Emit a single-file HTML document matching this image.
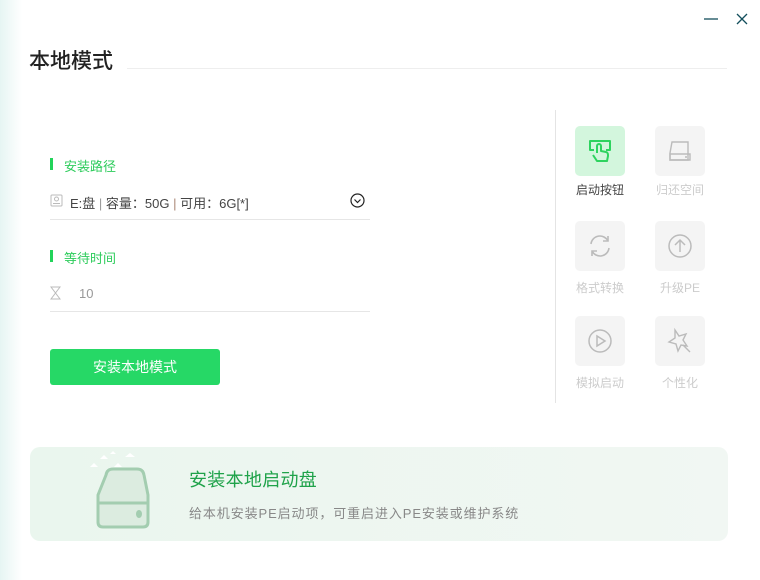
<!DOCTYPE html>
<html><head><meta charset="utf-8"><style>
body{margin:0;width:760px;height:580px;position:relative;overflow:hidden;background:#fff;font-family:"Liberation Sans","Noto Sans CJK SC",sans-serif;}
.abs{position:absolute}
.lbl{font-size:13px;color:#2ecc5c}
.bar{width:3px;height:12px;background:#22d35a}
.tile{width:50px;height:50px;border-radius:5px;background:#f4f4f4;display:flex;align-items:center;justify-content:center}
.tl{font-size:12px;color:#ccc;text-align:center;width:60px}
</style></head><body>
<div class="abs" style="left:0;top:0;width:22px;height:580px;background:linear-gradient(90deg,#e6f5f3,#fff)"></div>
<svg class="abs" style="left:703px;top:10px" width="50" height="20"><path d="M1 9H15" stroke="#134f5c" stroke-width="1.3"/><path d="M34 4L44 14M44 4L34 14" stroke="#134f5c" stroke-width="1.3"/></svg>
<div class="abs" style="left:29px;top:45px;font-size:21px;color:#222;font-weight:500">本地模式</div>
<div class="abs" style="left:127px;top:68px;width:600px;height:1px;background:#eee"></div>
<div class="abs bar" style="left:50px;top:158px"></div>
<div class="abs lbl" style="left:64px;top:156px">安装路径</div>
<svg class="abs" style="left:50px;top:194px" width="13" height="13"><rect x="1" y="1" width="11" height="11" rx="1" fill="none" stroke="#bbb"/><circle cx="6.5" cy="5" r="2" fill="none" stroke="#bbb"/><path d="M3 9.5H10" stroke="#bbb"/></svg>
<div class="abs" style="left:70px;top:193px;font-size:13px;color:#444">E:盘 <span style="color:#999">|</span> 容量：50G <span style="color:#a87">|</span> 可用：6G[*]</div>
<svg class="abs" style="left:350px;top:193px" width="15" height="15"><circle cx="7.5" cy="7.5" r="6.5" fill="none" stroke="#222" stroke-width="1.2"/><path d="M4.5 6.5L7.5 9.5L10.5 6.5" fill="none" stroke="#222" stroke-width="1.2"/></svg>
<div class="abs" style="left:50px;top:219px;width:320px;height:1px;background:#e6e6e6"></div>
<div class="abs bar" style="left:50px;top:250px"></div>
<div class="abs lbl" style="left:64px;top:248px">等待时间</div>
<svg class="abs" style="left:49px;top:286px" width="14" height="14"><path d="M2 1H11L6.5 7L11 13H2L6.5 7Z" fill="none" stroke="#bbb"/></svg>
<div class="abs" style="left:79px;top:286px;font-size:13px;color:#999">10</div>
<div class="abs" style="left:50px;top:311px;width:320px;height:1px;background:#e6e6e6"></div>
<div class="abs" style="left:50px;top:349px;width:170px;height:36px;border-radius:3px;background:#26d866;color:#fff;font-size:14px;text-align:center;line-height:36px">安装本地模式</div>
<div class="abs" style="left:555px;top:110px;width:1px;height:293px;background:#e4e4e4"></div>
<div class="abs tile" style="left:575px;top:126px;background:#d3f6dd"><svg width="28" height="28" viewBox="0 0 28 28"><path d="M8 13H4V4H24V13H20M11 16V9a2 2 0 0 1 4 0V14l5 1c2 .5 2 2 2 4l-1 5H11l-4-6" fill="none" stroke="#2ed35f" stroke-width="2" stroke-linejoin="round"/></svg></div>
<div class="abs tl" style="left:570px;top:181px;color:#444">启动按钮</div>
<div class="abs tile" style="left:655px;top:126px"><svg width="26" height="26"><path d="M5 4H21V22H3V15Z" fill="none" stroke="#bbb" stroke-width="1.4"/><path d="M3 16H23V22H3Z" fill="none" stroke="#bbb" stroke-width="1.4"/><circle cx="19" cy="19" r="1" fill="#bbb"/></svg></div>
<div class="abs tl" style="left:650px;top:181px">归还空间</div>
<div class="abs tile" style="left:575px;top:221px"><svg width="28" height="28"><path d="M5 12a9 9 0 0 1 17-3M23 16a9 9 0 0 1-17 3" fill="none" stroke="#bbb" stroke-width="1.6"/><path d="M22 4V9H17M6 24V19H11" fill="none" stroke="#bbb" stroke-width="1.6"/></svg></div>
<div class="abs tl" style="left:570px;top:279px">格式转换</div>
<div class="abs tile" style="left:655px;top:221px"><svg width="28" height="28"><circle cx="14" cy="14" r="11" fill="none" stroke="#bbb" stroke-width="1.5"/><path d="M14 20V8M9 13L14 8L19 13" fill="none" stroke="#bbb" stroke-width="1.5"/></svg></div>
<div class="abs tl" style="left:650px;top:279px">升级PE</div>
<div class="abs tile" style="left:575px;top:316px"><svg width="28" height="28"><circle cx="14" cy="14" r="11" fill="none" stroke="#bbb" stroke-width="1.5"/><path d="M11 9V19L19 14Z" fill="none" stroke="#bbb" stroke-width="1.5"/></svg></div>
<div class="abs tl" style="left:570px;top:374px">模拟启动</div>
<div class="abs tile" style="left:655px;top:316px"><svg width="28" height="28"><path d="M9 3L13 9L20 7L17 13L21 19L15 18L12 24L10 17L3 15L9 11Z" fill="none" stroke="#bbb" stroke-width="1.4"/><path d="M17 18L24 25" stroke="#bbb" stroke-width="1.4"/></svg></div>
<div class="abs tl" style="left:650px;top:374px">个性化</div>
<div class="abs" style="left:30px;top:447px;width:698px;height:94px;border-radius:10px;background:linear-gradient(90deg,#eaf6ee,#f1f7f3)"></div>
<svg class="abs" style="left:85px;top:447px" width="80" height="85"><path d="M5 20h8l-4-4zM15 12h8l-4-4zM29 20h8l-4-4zM40 10h10l-5-4zM25 7h6l-3-3z" fill="#fff"/><path d="M21 28Q22 22 28 22H52Q58 22 59 28L63 48V75Q63 80 58 80H18Q13 80 13 75V48Z" fill="#dcece0" stroke="#a3cdb0" stroke-width="3"/><path d="M13 56H63" stroke="#a3cdb0" stroke-width="3"/><ellipse cx="54" cy="67" rx="3" ry="4" fill="#a3cdb0"/></svg>
<div class="abs" style="left:189px;top:466px;font-size:18px;color:#1fa24a;letter-spacing:0.3px">安装本地启动盘</div>
<div class="abs" style="left:189px;top:503px;font-size:13px;color:#888;letter-spacing:0.9px">给本机安装PE启动项，可重启进入PE安装或维护系统</div>
</body></html>
